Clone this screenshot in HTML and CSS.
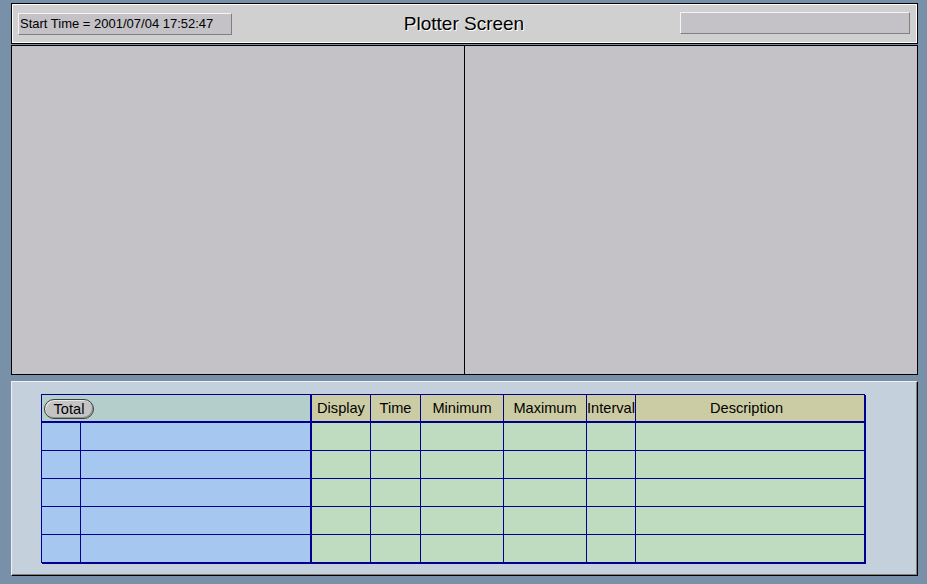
FILE: index.html
```html
<!DOCTYPE html>
<html>
<head>
<meta charset="utf-8">
<title>Plotter Screen</title>
<link rel="stylesheet" href="styles.css">
</head>
<body>
<div class="screen">
  <header class="topbar">
    <div class="topbar-left"><div class="start-box">Start Time = 2001/07/04 17:52:47</div></div>
    <h1 class="title">Plotter Screen</h1>
    <div class="topbar-right"><div class="status-box"></div></div>
  </header>
  <section class="plots">
    <div class="plot"></div>
    <div class="plot"></div>
  </section>
  <section class="bottom">
    <div class="grid">
      <div class="hcell hcell-total"><span class="total-btn">Total</span></div>
      <div class="hcell">Display</div>
      <div class="hcell">Time</div>
      <div class="hcell">Minimum</div>
      <div class="hcell">Maximum</div>
      <div class="hcell">Interval</div>
      <div class="hcell hcell-desc">Description</div>

      <div class="c blue"></div><div class="c blue wide"></div><div class="c green"></div><div class="c green"></div><div class="c green"></div><div class="c green"></div><div class="c green"></div><div class="c green"></div>
      <div class="c blue"></div><div class="c blue wide"></div><div class="c green"></div><div class="c green"></div><div class="c green"></div><div class="c green"></div><div class="c green"></div><div class="c green"></div>
      <div class="c blue"></div><div class="c blue wide"></div><div class="c green"></div><div class="c green"></div><div class="c green"></div><div class="c green"></div><div class="c green"></div><div class="c green"></div>
      <div class="c blue"></div><div class="c blue wide"></div><div class="c green"></div><div class="c green"></div><div class="c green"></div><div class="c green"></div><div class="c green"></div><div class="c green"></div>
      <div class="c blue"></div><div class="c blue wide"></div><div class="c green"></div><div class="c green"></div><div class="c green"></div><div class="c green"></div><div class="c green"></div><div class="c green"></div>
    </div>
  </section>
</div>
</body>
</html>
```

FILE: styles.css
```css
* { box-sizing: border-box; }
html, body {
  margin: 0;
  padding: 0;
  background: #7890a8;
  font-family: "Liberation Sans", Arial, sans-serif;
  color: #000;
}
body { width: 927px; height: 584px; overflow: hidden; }

.screen {
  display: flex;
  flex-direction: column;
  padding: 3px 0 0 11px;
  width: 918px;
}

.topbar {
  height: 41px;
  width: 907px;
  background: #d0d0d0;
  border: 1px solid #000;
  box-shadow: inset 1px 1px 0 #fff, inset -1px -1px 0 #fff;
  display: grid;
  grid-template-columns: 1fr auto 1fr;
  align-items: center;
  padding: 0 7px 0 6px;
}
.topbar-left { display: flex; }
.topbar-right { display: flex; justify-content: flex-end; }
.start-box {
  width: 214px;
  height: 22px;
  background: #c4c2c6;
  border: 1px solid;
  border-color: #f4f4f4 #808080 #808080 #f4f4f4;
  font-size: 13px;
  line-height: 20px;
  padding-left: 1px;
  white-space: nowrap;
}
.status-box {
  width: 230px;
  height: 22px;
  background: #c4c2c6;
  border: 1px solid;
  border-color: #f4f4f4 #808080 #808080 #f4f4f4;
  margin-top: -1px;
}
.title {
  margin: 0;
  font-size: 19px;
  font-weight: normal;
  text-shadow: 1px 1px 0 #fff;
  line-height: 22px;
}

.plots {
  margin-top: 1px;
  width: 907px;
  height: 330px;
  border: 1px solid #000;
  display: flex;
  background: #000;
  gap: 1px;
}
.plot {
  flex: 1;
  background: #c4c2c6;
}

.bottom {
  margin-top: 6px;
  width: 907px;
  height: 195px;
  background: #c4d0dc;
  border: 1px solid;
  border-color: #eef0f4 #000 #000 #eef0f4;
  box-shadow: inset -1px -1px 0 #808080;
  padding: 12px 0 0 29px;
}

.grid {
  display: inline-grid;
  grid-template-columns: 38px 230px 58px 49px 82px 82px 48px 228px;
  grid-template-rows: repeat(6, 27px);
  column-gap: 1px;
  row-gap: 1px;
  background: #000090;
  padding: 1px 1px 1px 1px;
  box-shadow: 1px 1px 0 #000090;
}
.hcell {
  background: #cccca4;
  margin-bottom: 1px;
  font-size: 14.6px;
  display: flex;
  align-items: center;
  justify-content: center;
  white-space: nowrap;
  overflow: hidden;
}
.hcell-desc { padding-right: 7px; }
.hcell-total {
  grid-column: 1 / 3;
  margin-right: 1px;
  background: #b4cecc;
  justify-content: flex-start;
  padding-left: 2px;
}
.total-btn {
  display: inline-flex;
  align-items: center;
  justify-content: center;
  width: 50px;
  height: 20px;
  border: 1px solid #404040;
  border-radius: 10px;
  background: #c4c4c4;
  box-shadow: inset 1px 1px 0 #e8e8e8, inset -1px -1px 0 #909090;
  font-size: 14.6px;
  margin-top: 1px;
}
.c.blue { background: #a6c8f0; }
.c.green { background: #c0dcc0; }
.c.wide { margin-right: 1px; }
```
